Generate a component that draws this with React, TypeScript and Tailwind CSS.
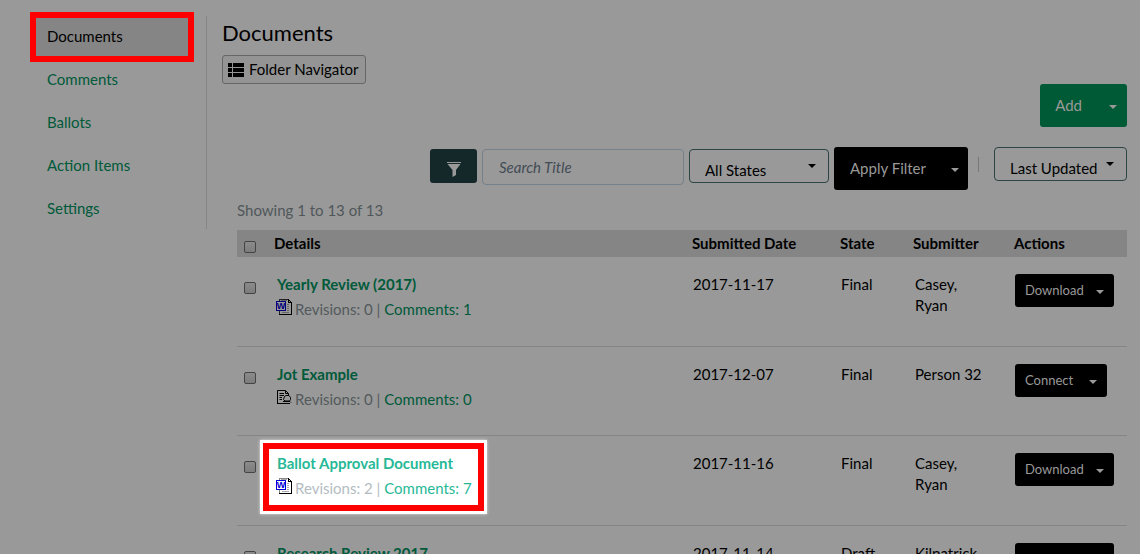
import { useState } from "react";

const navItems = ["Documents", "Comments", "Ballots", "Action Items", "Settings"];

type Doc = {
  title: string;
  kind: "word" | "jot";
  revisions: number;
  comments: number;
  date: string;
  state: string;
  submitter: string;
  action: "Download" | "Connect";
  highlighted?: boolean;
};

const docs: Doc[] = [
  {
    title: "Yearly Review (2017)",
    kind: "word",
    revisions: 0,
    comments: 1,
    date: "2017-11-17",
    state: "Final",
    submitter: "Casey, Ryan",
    action: "Download",
  },
  {
    title: "Jot Example",
    kind: "jot",
    revisions: 0,
    comments: 0,
    date: "2017-12-07",
    state: "Final",
    submitter: "Person 32",
    action: "Connect",
  },
  {
    title: "Ballot Approval Document",
    kind: "word",
    revisions: 2,
    comments: 7,
    date: "2017-11-16",
    state: "Final",
    submitter: "Casey, Ryan",
    action: "Download",
    highlighted: true,
  },
  {
    title: "Research Review 2017",
    kind: "word",
    revisions: 0,
    comments: 0,
    date: "2017-11-14",
    state: "Draft",
    submitter: "Kilpatrick",
    action: "Download",
  },
];

const actionGap = {
  Download: "gap-3",
  Connect: "gap-4",
};

function Caret() {
  return (
    <span className="block h-0 w-0 border-x-4 border-t-4 border-x-transparent border-t-current" />
  );
}

function ListIcon() {
  return (
    <svg width="16" height="14" viewBox="0 0 16 14" fill="currentColor" aria-hidden="true">
      <path d="M0 0h4v4H0zM5 0h11v4H5zM0 5h4v4H0zM5 5h11v4H5zM0 10h4v4H0zM5 10h11v4H5z" />
    </svg>
  );
}

function FunnelIcon() {
  return (
    <svg width="14" height="15" viewBox="0 0 14 15" fill="currentColor" aria-hidden="true">
      <path d="M0 0h14v1H0zM.5 2h13L9 8v5l-3.500 2V8z" />
    </svg>
  );
}

function WordIcon({ bright }: { bright?: boolean }) {
  const paper = bright ? "#ffffff" : "#999999";
  const blue = bright ? "#0000d8" : "#00007c";
  return (
    <svg
      width="16"
      height="16"
      viewBox="0 0 16 16"
      className="mb-[9px] -ml-px shrink-0"
      shapeRendering="crispEdges"
      aria-hidden="true"
    >
      <path d="M3 0h10l3 3v13H3z" fill={paper} />
      <path d="M3.500 3V.5H13M3.500 12v3.500" fill="none" stroke={bright ? "#888" : "#222"} />
      <path d="M12 0h1v3h3v13H3v-1h12V4h-3zM13 1h1v1h-1zM14 2h1v1h-1z" fill="#000" />
      <path d="M5 1.500h6M11 5.500h2M11 7.500h2M11 9.500h2M11 11.500h2M6 13.500h7" stroke={bright ? "#aaa" : "#666"} />
      <rect x=".5" y="2.500" width="9" height="9" fill={paper} stroke={blue} />
      <text
        x="5"
        y="10"
        textAnchor="middle"
        fontSize="9"
        fontWeight="700"
        fontFamily="Liberation Sans, sans-serif"
        fill={blue}
      >
        W
      </text>
    </svg>
  );
}

function JotIcon() {
  return (
    <svg
      width="16"
      height="15"
      viewBox="0 0 16 15"
      className="mt-px mb-2 -ml-px shrink-0"
      fill="none"
      stroke="#000"
      aria-hidden="true"
    >
      <path d="M1.500 13.500V.5h8l3 3V5M9.500.5v3h3" />
      <path d="M1 13.500h13" />
      <path d="M3.500 3.500H8M3.500 5.500H8M3.500 7.500H6M3.500 9.500H6" />
      <path d="M8.500 6.500 10 5.500h3l1.500 2v2l-1 1.500H9L7.500 9.500zM7 11.500h7l1 1" />
    </svg>
  );
}

function SplitButton({ label, className }: { label: string; className: string }) {
  return (
    <div className={`inline-flex rounded-[3px] ${className}`}>
      <button type="button" className="h-full">
        {label}
      </button>
      <button type="button" aria-label={`${label} options`} className="flex items-center pt-[2px]">
        <Caret />
      </button>
    </div>
  );
}

function Check({ label }: { label: string }) {
  return (
    <input
      type="checkbox"
      aria-label={label}
      className="block size-3 appearance-none rounded-[2px] border border-[#444] bg-linear-to-b from-[#8b8b8b] to-[#7c7c7c] checked:bg-[#333]"
    />
  );
}

function DocRow({ doc }: { doc: Doc }) {
  const link = doc.highlighted ? "text-[#27b997]" : "text-[#005a3a]";
  return (
    <tr className="border-b border-[#858585] align-top">
      <td className="pt-[25px] pl-[7px]">
        <Check label={doc.title} />
      </td>
      <td className="pt-[17px] pb-[26px] pl-[3px]">
        <div className="relative isolate inline-block align-top">
          {doc.highlighted && (
            <span className="absolute -top-[10px] -right-3 -bottom-3 -left-[14px] -z-10 border-6 border-[#f00] bg-white shadow-[0_0_0_3px_#fff,0_0_3px_3px_#ddd]" />
          )}
          <a href="#" className={`block font-bold ${link}`}>
            {doc.title}
          </a>
          <div className="mt-1 -mb-1 flex gap-[3px]">
            {doc.kind === "word" ? <WordIcon bright={doc.highlighted} /> : <JotIcon />}
            <span className={doc.highlighted ? "text-[#b4bcc2]" : "text-[#53595c]"}>
              Revisions: {doc.revisions} |{" "}
              <a href="#" className={link}>
                Comments: {doc.comments}
              </a>
            </span>
          </div>
        </div>
      </td>
      <td className="pt-[17px] pl-px">{doc.date}</td>
      <td className="pt-[17px] pl-px">{doc.state}</td>
      <td className="pt-[17px] pr-6 pl-[2px]">{doc.submitter}</td>
      <td className="pt-[17px] pl-px">
        <SplitButton
          label={doc.action}
          className={`h-[33px] bg-black px-[10px] text-[13px] text-[#999] ${actionGap[doc.action]}`}
        />
      </td>
    </tr>
  );
}

export default function App() {
  const [active, setActive] = useState("Documents");
  const [search, setSearch] = useState("");

  return (
    <div className="flex h-screen items-start overflow-hidden bg-[#999] font-['Lato',sans-serif] text-[15px] leading-[21px] text-black">
      {/* Side navigation */}
      <nav className="mt-4 ml-9 flex w-[171px] shrink-0 flex-col gap-[5px] border-r border-[#858585] pt-[2px] pr-[18px] pb-px">
        {navItems.map((item) => (
          <a
            key={item}
            href="#"
            onClick={() => setActive(item)}
            className={`flex h-[38px] items-center pb-[2px] pl-[11px] ${
              active === item
                ? "bg-[#858585] text-black outline-6 outline-[#f00]"
                : "text-[#005a3a]"
            }`}
          >
            {item}
          </a>
        ))}
      </nav>

      <main className="flex-1 pt-[21px] pr-[13px] pl-[15px]">
        <h1 className="text-[22px] leading-6">Documents</h1>
        <button
          type="button"
          className="mt-[10px] flex h-[29px] items-center gap-[5px] rounded-[3px] border border-[#666] bg-[#949494] pr-[6px] pl-[5px]"
        >
          <ListIcon />
          Folder Navigator
        </button>

        <div className="pl-[15px]">
          <div className="flex justify-end">
            <SplitButton
              label="Add"
              className="h-[43px] gap-[27px] bg-[#005a36] pr-[10px] pl-[15px] text-[#999]"
            />
          </div>

          {/* Filters */}
          <div className="mt-5 flex items-start justify-end gap-[5px]">
            <div className="flex items-start gap-[5px] pt-[2px]">
              <button
                type="button"
                aria-label="Filter"
                className="flex h-[34px] w-[47px] items-center justify-center rounded-[3px] bg-[#14282a] pt-[7px] text-[#999]"
              >
                <FunnelIcon />
              </button>
              <input
                type="text"
                aria-label="Search Title"
                placeholder="Search Title"
                value={search}
                onChange={(e) => setSearch(e.target.value)}
                className="h-9 w-[202px] rounded-[4px] border border-[#75808a] px-4 placeholder:text-[#434c55] placeholder:italic"
              />
              <div className="relative">
                <select
                  aria-label="State"
                  className="h-[34px] w-[140px] appearance-none rounded-[4px] border border-[#2c4444] pt-2 pl-[15px]"
                >
                  <option>All States</option>
                  <option>Final</option>
                  <option>Draft</option>
                </select>
                <span className="pointer-events-none absolute top-[15px] right-[13px]">
                  <Caret />
                </span>
              </div>
            </div>
            <SplitButton
              label="Apply Filter"
              className="h-[43px] gap-[25px] bg-black pr-[9px] pl-4 text-[#999]"
            />
            <div className="mx-[5px] mt-[10px] h-[15px] w-px bg-[#777]" />
            <div className="relative ml-[5px]">
              <select
                aria-label="Sort by"
                className="h-[34px] w-[133px] appearance-none rounded-[4px] border border-[#2c4444] pt-2 pl-[15px]"
              >
                <option>Last Updated</option>
                <option>Title</option>
              </select>
              <span className="pointer-events-none absolute top-[15px] right-[13px]">
                <Caret />
              </span>
            </div>
          </div>

          <p className="mt-[10px] leading-5 text-[#50575a]">Showing 1 to 13 of 13</p>

          <table className="mt-[10px] w-full table-fixed border-collapse text-left">
            <colgroup>
              <col className="w-[37px]" />
              <col />
              <col className="w-[148px]" />
              <col className="w-[73px]" />
              <col className="w-[101px]" />
              <col className="w-[113px]" />
            </colgroup>
            <thead>
              <tr className="h-[27px] bg-[#858585]">
                <th className="pt-[6px] pl-[7px]">
                  <Check label="Select all" />
                </th>
                <th>Details</th>
                <th>Submitted Date</th>
                <th>State</th>
                <th>Submitter</th>
                <th>Actions</th>
              </tr>
            </thead>
            <tbody>
              {docs.map((doc) => (
                <DocRow key={doc.title} doc={doc} />
              ))}
            </tbody>
          </table>
        </div>
      </main>
    </div>
  );
}
